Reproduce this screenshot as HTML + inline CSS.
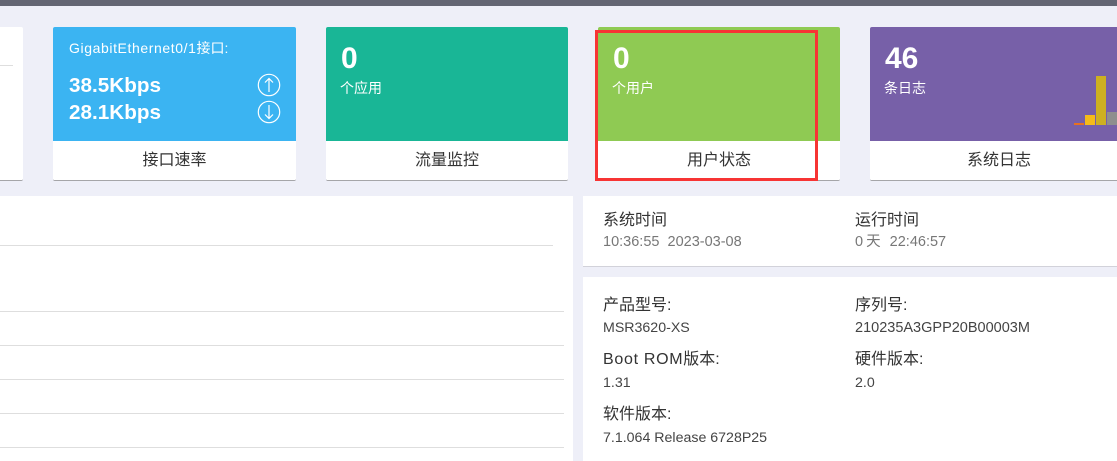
<!DOCTYPE html>
<html><head><meta charset="utf-8"><style>
html,body{margin:0;padding:0;width:1117px;height:461px;overflow:hidden;background:#eeeff8}
body{position:relative;font-family:"Liberation Sans","Noto Sans CJK SC",sans-serif}
div{position:absolute;box-sizing:border-box}
.t{white-space:nowrap;line-height:20px}
.card{top:27px;width:243px;height:154px;background:#fff;border-bottom:1px solid #a5a5a8;border-radius:2px;overflow:hidden}
.top{left:0;top:0;width:100%;height:114px}
.lab{left:0;width:100%;top:123px;text-align:center;font-size:16px;color:#333;line-height:22px}
.num{left:15px;top:14px;font-size:30px;font-weight:bold;color:#fff;line-height:36px;white-space:nowrap}
.sub{left:14px;top:51px;font-size:14px;color:#fff;line-height:20px;white-space:nowrap}
.ln{height:1px;background:#dedede;left:0}
.h{font-size:16px;color:#333}
.v{font-size:14.2px;color:#444}
.g{font-size:14.5px;color:#777}
</style></head><body>
<div style="left:0;top:0;width:1117px;height:6px;background:#636573"></div>

<div style="left:0;top:27px;width:23px;height:154px;background:#fff;border-bottom:1px solid #a5a5a8;border-radius:0 2px 2px 0"></div>
<div class="ln" style="top:65px;width:13px"></div>

<div class="card" style="left:53px">
  <div class="top" style="background:#3bb4f2"></div>
  <div class="t" style="left:16px;top:11px;font-size:14px;color:#fff"><span style="letter-spacing:.6px">GigabitEthernet0/1</span>接口:</div>
  <div class="t" style="left:16px;top:47px;font-size:20.7px;font-weight:bold;color:#fff;line-height:24px">38.5Kbps</div>
  <div class="t" style="left:16px;top:74px;font-size:20.7px;font-weight:bold;color:#fff;line-height:24px">28.1Kbps</div>
  <svg style="position:absolute;left:204px;top:46px" width="24" height="52" viewBox="0 0 24 52" fill="none" stroke="#fff" stroke-width="1.2">
    <circle cx="12" cy="12" r="10.7"/><path d="M12 19V5.5M8 9.5L12 5.5L16 9.5"/>
    <circle cx="12" cy="39" r="10.7"/><path d="M12 32V45.5M8 41.5L12 45.5L16 41.5"/>
  </svg>
  <div class="lab">接口速率</div>
</div>

<div class="card" style="left:326px;width:242px">
  <div class="top" style="background:#19b696"></div>
  <div class="num">0</div><div class="sub">个应用</div>
  <div class="lab">流量监控</div>
</div>

<div class="card" style="left:598px;width:242px">
  <div class="top" style="background:#8fca53"></div>
  <div class="num">0</div><div class="sub">个用户</div>
  <div class="lab">用户状态</div>
</div>

<div class="card" style="left:870px;width:260px">
  <div class="top" style="background:#7760a8"></div>
  <div class="num">46</div><div class="sub">条日志</div>
  <div style="left:204px;top:96px;width:10px;height:2px;background:#e8711f"></div>
  <div style="left:215px;top:88px;width:10px;height:10px;background:#f5bb19"></div>
  <div style="left:226px;top:49px;width:10px;height:49px;background:#cdb021"></div>
  <div style="left:237px;top:85px;width:10px;height:13px;background:#8e8e8e"></div>
  <div class="lab" style="left:0;width:258px">系统日志</div>
</div>

<div style="left:595px;top:30px;width:223px;height:151px;border:3px solid #f73434"></div>

<div style="left:0;top:196px;width:573px;height:265px;background:#fff"></div>
<div class="ln" style="top:245px;width:553px"></div>
<div class="ln" style="top:311px;width:564px"></div>
<div class="ln" style="top:345px;width:564px"></div>
<div class="ln" style="top:379px;width:564px"></div>
<div class="ln" style="top:413px;width:564px"></div>
<div class="ln" style="top:447px;width:564px"></div>

<div style="left:583px;top:196px;width:534px;height:71px;background:#fff;border-bottom:1px solid #d2d2da"></div>
<div style="left:583px;top:277px;width:534px;height:184px;background:#fff"></div>

<div class="t h" style="left:603px;top:211px">系统时间</div>
<div class="t g" style="left:603px;top:232px">10:36:55&nbsp; 2023-03-08</div>
<div class="t h" style="left:855px;top:211px">运行时间</div>
<div class="t g" style="left:855px;top:232px;word-spacing:-1px">0 天&nbsp;&nbsp; 22:46:57</div>

<div class="t h" style="left:603px;top:296px">产品型号:</div>
<div class="t v" style="left:603px;top:318px">MSR3620-XS</div>
<div class="t h" style="left:603px;top:350px"><span style="letter-spacing:.7px">Boot ROM</span>版本:</div>
<div class="t v" style="left:603px;top:373px">1.31</div>
<div class="t h" style="left:603px;top:405px">软件版本:</div>
<div class="t v" style="left:603px;top:428px">7.1.064 Release 6728P25</div>

<div class="t h" style="left:855px;top:296px">序列号:</div>
<div class="t v" style="left:855px;top:318px;font-size:14.5px">210235A3GPP20B00003M</div>
<div class="t h" style="left:855px;top:350px">硬件版本:</div>
<div class="t v" style="left:855px;top:373px">2.0</div>
</body></html>
